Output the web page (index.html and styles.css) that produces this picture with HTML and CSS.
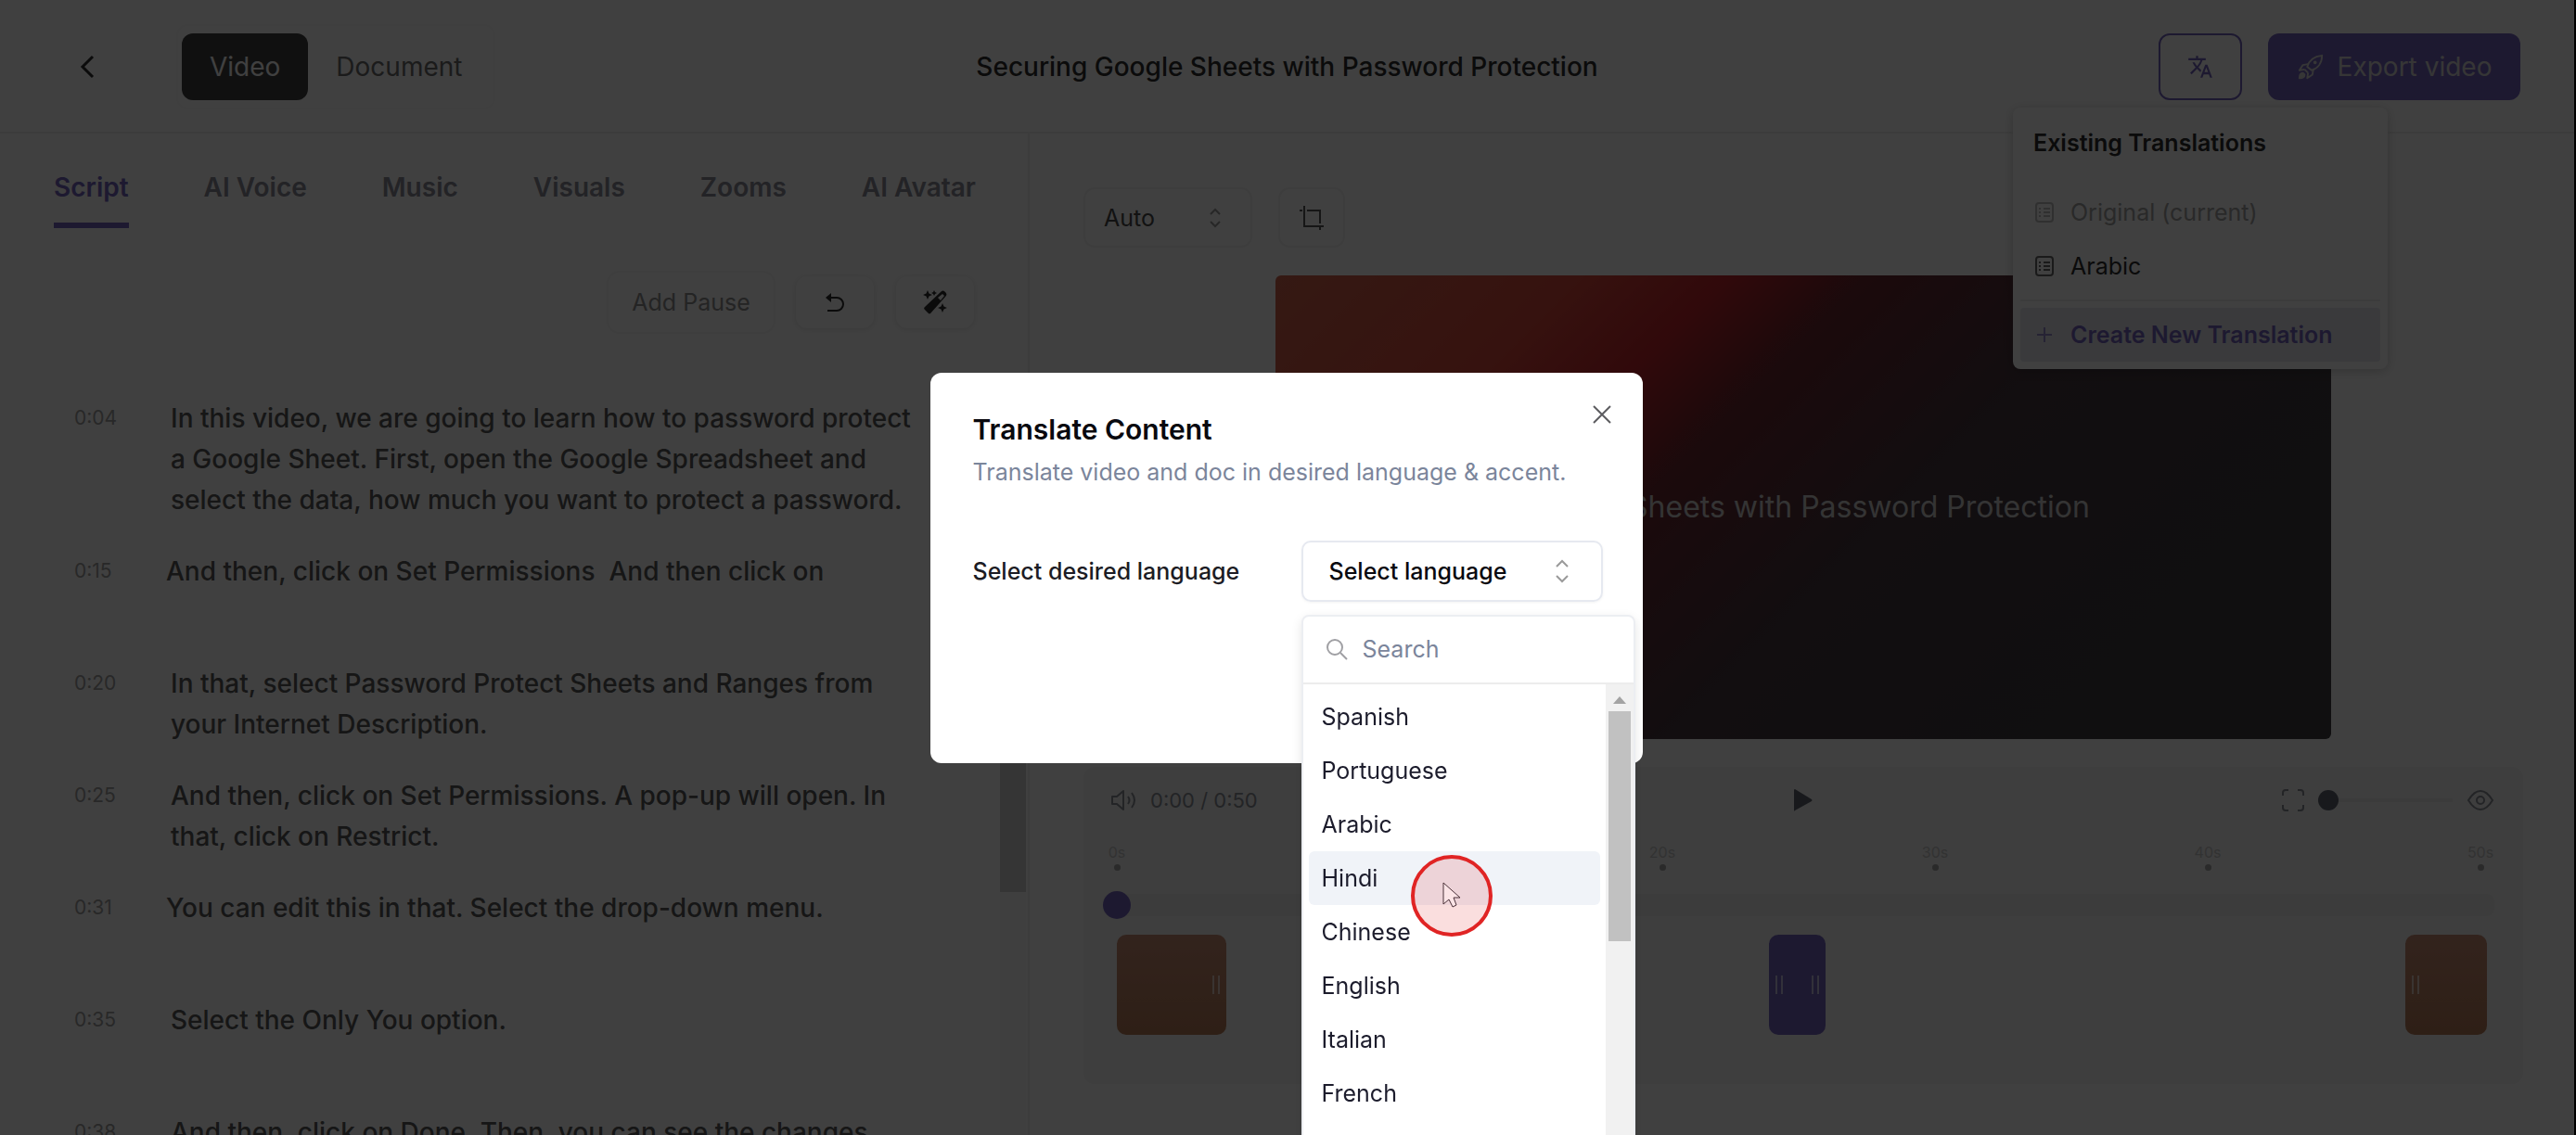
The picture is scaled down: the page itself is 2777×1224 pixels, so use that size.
FILE: index.html
```html
<!DOCTYPE html>
<html lang="en">
<head>
<meta charset="utf-8">
<title>Securing Google Sheets with Password Protection</title>
<link rel="stylesheet" href="styles.css">
</head>
<body>
<div class="app">
  <header class="header">
    <div class="header-start">
      <button class="back" aria-label="Back"><svg width="24" height="32" viewBox="0 0 24 32"><path d="M18 5 7 16l11 11" fill="none" stroke="currentColor" stroke-width="3"/></svg></button>
      <div class="mode">
        <button class="mode-item mode-active">Video</button>
        <button class="mode-item">Document</button>
      </div>
    </div>
    <h1 class="title">Securing Google Sheets with Password Protection</h1>
    <div class="header-end">
      <div class="translate">
        <button class="translate-button" aria-label="Translate"><svg width="28" height="28" viewBox="0 0 24 24" fill="currentColor"><path d="m12.87 15.07-2.54-2.51.03-.03A17.52 17.52 0 0 0 14.07 6H17V4h-7V2H8v2H1v2h11.17C11.5 7.92 10.44 9.75 9 11.35 8.07 10.32 7.3 9.19 6.69 8h-2c.73 1.63 1.73 3.17 2.98 4.56l-5.09 5.02L4 19l5-5 3.11 3.11.76-2.04zM18.5 10h-2L12 22h2l1.12-3h4.75L21 22h2l-4.5-12zm-2.62 7 1.62-4.33L19.12 17h-3.24z"/></svg></button>
        <div class="menu">
          <h2 class="menu-title">Existing Translations</h2>
          <button class="menu-item" disabled><svg class="menu-icon" width="24" height="24" viewBox="0 0 24 24"><rect x="3" y="2" width="18" height="20" rx="3"/><path d="M6 8h2m3 0h7M6 12h2m3 0h7M6 16h2m3 0h7"/></svg>Original (current)</button>
          <button class="menu-item"><svg class="menu-icon" width="24" height="24" viewBox="0 0 24 24"><rect x="3" y="2" width="18" height="20" rx="3"/><path d="M6 8h2m3 0h7M6 12h2m3 0h7M6 16h2m3 0h7"/></svg>Arabic</button>
          <hr class="menu-line">
          <button class="menu-item menu-create"><svg class="menu-icon" width="24" height="24" viewBox="0 0 24 24"><path d="M12 4v16M4 12h16"/></svg>Create New Translation</button>
        </div>
      </div>
      <button class="export"><svg width="30" height="30" viewBox="0 0 32 32" fill="none" stroke="currentColor" stroke-width="2" stroke-linejoin="round"><path d="M12 16c2-7 8-12 17-13 0 9-5 15-12 17z"/><path d="m13 13-6 1-4 6 6-1M19 19l-1 6-6 4 1-6M9 19l4 4"/><circle cx="21" cy="11" r="1"/><path d="M7 23c-3 0-4 3-4 6 3 0 6-1 6-4z" fill="currentColor"/></svg>Export video</button>
    </div>
  </header>

  <main class="main">
    <section class="editor">
      <nav class="tabs">
        <a class="tab tab-active" href="#script">Script</a>
        <a class="tab" href="#voice">AI Voice</a>
        <a class="tab" href="#music">Music</a>
        <a class="tab" href="#visuals">Visuals</a>
        <a class="tab" href="#zooms">Zooms</a>
        <a class="tab" href="#avatar">AI Avatar</a>
      </nav>
      <div class="tools">
        <button class="tool tool-pause" disabled>Add Pause</button>
        <button class="tool" aria-label="Undo"><svg width="24" height="24" viewBox="0 0 24 24" fill="none" stroke="currentColor" stroke-width="2"><path d="M5 7h9a7 7 0 0 1 0 14H4"/><path d="M8 2v10L2 7z" fill="currentColor" stroke="none"/></svg></button>
        <button class="tool" aria-label="Magic edit"><svg width="28" height="28" viewBox="0 0 28 28" fill="currentColor"><path d="M20.500 2.500a3 3 0 0 1 4 0l1 1a3 3 0 0 1 0 4L9.500 25.500a2 2 0 0 1-3 0l-3.500-3.500a2 2 0 0 1 0-3zM17 9l3 3 4-5-2-2z" fill-rule="evenodd"/><path d="m6 1 1.500 3.500L11 6 7.500 7.500 6 11 4.500 7.500 1 6l3.500-1.500zM22 15l1.500 3.500L27 20l-3.500 1.500L22 25l-1.500-3.500L17 20l3.500-1.500zM13 1l1 2 2 1-2 1-1 2-1-2-2-1 2-1z"/></svg></button>
      </div>
      <div class="script">
        <ol class="lines">
          <li class="line"><time class="stamp">0:04</time><p class="words">In this video, we are going to learn how to password protect a Google Sheet. First, open the Google Spreadsheet and select the data, how much you want to protect a password.</p></li>
          <li class="line line-single"><time class="stamp">0:15</time><p class="words">And then, click on Set Permissions&nbsp; And then click on</p></li>
          <li class="line"><time class="stamp">0:20</time><p class="words">In that, select Password Protect Sheets and Ranges from your Internet Description.</p></li>
          <li class="line"><time class="stamp">0:25</time><p class="words">And then, click on Set Permissions. A pop-up will open. In that, click on Restrict.</p></li>
          <li class="line line-single"><time class="stamp">0:31</time><p class="words">You can edit this in that. Select the drop-down menu.</p></li>
          <li class="line"><time class="stamp">0:35</time><p class="words">Select the Only You option.</p></li>
          <li class="line"><time class="stamp">0:38</time><p class="words">And then, click on Done. Then, you can see the changes.</p></li>
        </ol>
        <div class="rail"><div class="rail-thumb"></div></div>
      </div>
    </section>

    <section class="stage">
      <div class="stage-tools">
        <span class="picker">
          <select class="ratio" aria-label="Aspect ratio"><option>Auto</option></select>
          <svg class="picker-icon" width="16" height="24" viewBox="0 0 16 24"><path d="m3 8 5-5 5 5M3 16l5 5 5-5"/></svg>
        </span>
        <button class="crop" aria-label="Crop"><svg width="28" height="28" viewBox="0 0 28 28" fill="none" stroke="currentColor" stroke-width="2"><path d="M6 1v22h21M1 6h3M9 6h14v14M23 23v4"/></svg></button>
      </div>
      <div class="video"><p class="video-title">Securing Google Sheets with Password Protection</p></div>
      <div class="player">
        <div class="controls">
          <div class="controls-start">
            <svg width="30" height="28" viewBox="0 0 30 28" fill="none" stroke="currentColor" stroke-width="2" stroke-linejoin="round"><path d="M2 10h5l7-6v20l-7-6H2zM19 10q3 4 0 8M23 6q6 8 0 16"/></svg>
            <span class="clock">0:00 / 0:50</span>
          </div>
          <button class="play" aria-label="Play"><svg width="24" height="28" viewBox="0 0 24 28"><path d="M3 3v22q0 1 1 0l18-10q1-1 0-2L4 2Q3 2 3 3z" fill="currentColor"/></svg></button>
          <div class="controls-end">
            <svg width="24" height="24" viewBox="0 0 24 24" fill="none" stroke="currentColor" stroke-width="2"><path d="M1 7V4q0-3 3-3h3M17 1h3q3 0 3 3v3M23 17v3q0 3-3 3h-3M7 23H4q-3 0-3-3v-3"/></svg>
            <input class="zoom" type="range" min="0" max="100" value="0" aria-label="Timeline zoom">
            <svg width="30" height="24" viewBox="0 0 30 24" fill="none" stroke="currentColor" stroke-width="2"><path d="M2 12Q8 2 15 2t13 10q-6 10-13 10T2 12z"/><circle cx="15" cy="12" r="4"/></svg>
          </div>
        </div>
        <div class="timeline">
          <div class="ticks">
            <span class="tick">0s</span><span class="tick">10s</span><span class="tick">20s</span><span class="tick">30s</span><span class="tick">40s</span><span class="tick">50s</span>
          </div>
          <input class="seek" type="range" min="0" max="50" value="0" aria-label="Playback position">
          <div class="lane">
            <div class="clip clip-end" style="left:0%;width:8%"><i class="grip"></i></div>
            <div class="clip clip-zoom" style="left:47.800%;width:4.200%"><i class="grip"></i><i class="grip"></i></div>
            <div class="clip" style="left:94.500%;width:6%"><i class="grip"></i></div>
          </div>
        </div>
      </div>
    </section>
  </main>
</div>

<div class="backdrop">
  <div class="modal" role="dialog" aria-labelledby="dialog-title">
    <button class="close" aria-label="Close"><svg width="24" height="24" viewBox="0 0 24 24"><path d="m3 3 18 18M21 3 3 21" fill="none" stroke="currentColor" stroke-width="2"/></svg></button>
    <h2 class="modal-title" id="dialog-title">Translate Content</h2>
    <p class="modal-text">Translate video and doc in desired language &amp; accent.</p>
    <div class="field">
      <label class="field-label" for="language">Select desired language</label>
      <div class="combo">
        <button class="combo-button" id="language" aria-haspopup="listbox" aria-expanded="true">Select language<svg class="picker-icon" width="20" height="28" viewBox="0 0 20 28"><path d="m4 9 6-6 6 6M4 19l6 6 6-6"/></svg></button>
        <div class="popover">
          <div class="search">
            <svg width="24" height="24" viewBox="0 0 24 24" fill="none" stroke="currentColor" stroke-width="2"><circle cx="10" cy="10" r="8"/><path d="m16 16 7 7"/></svg>
            <input class="search-input" type="text" placeholder="Search" aria-label="Search languages">
          </div>
          <div class="results">
            <ul class="options" role="listbox">
              <li class="option" role="option">Spanish</li>
              <li class="option" role="option">Portuguese</li>
              <li class="option" role="option">Arabic</li>
              <li class="option option-active" role="option" aria-selected="true">Hindi</li>
              <li class="option" role="option">Chinese</li>
              <li class="option" role="option">English</li>
              <li class="option" role="option">Italian</li>
              <li class="option" role="option">French</li>
            </ul>
            <div class="bar">
              <svg width="16" height="8" viewBox="0 0 16 8"><path d="m8 0 7 8H1z" fill="#a3a3a3"/></svg>
              <div class="bar-thumb"></div>
            </div>
          </div>
          <div class="pointer"><svg width="24" height="32" viewBox="0 0 24 32"><path d="M3 2v23l6-5 4 8 4-2-3-8h7z" fill="#fbe4e6" stroke="#4a3038" stroke-width="1"/></svg></div>
        </div>
      </div>
    </div>
  </div>
</div>
</body>
</html>
```
FILE: styles.css
```css
:root {
  --ink: #2c2c2c;
  --muted: #8a8a98;
  --line: #f0f0f0;
  --purple: #7666c0;
}

* { box-sizing: border-box; }

body {
  margin: 0;
  height: 100vh;
  overflow: hidden;
  background: #000;
  color: var(--ink);
  font-family: Inter, "Liberation Sans", sans-serif;
  font-size: 28px;
  line-height: 40px;
}

h1, h2, p, ol, ul { margin: 0; padding: 0; list-style: none; }

button, input, select {
  margin: 0;
  padding: 0;
  border: 0;
  background: none;
  color: inherit;
  font: inherit;
}

button {
  display: flex;
  align-items: center;
  justify-content: center;
}

svg { flex: none; display: block; }

.app {
  display: flex;
  flex-direction: column;
  height: 100vh;
  margin-right: 2px;
  background: #fff;
}

/* Header */
.header {
  display: grid;
  grid-template-columns: 1fr auto 1fr;
  align-items: center;
  height: 144px;
  flex: none;
  padding: 2px 58px 0 82px;
  border-bottom: 2px solid var(--line);
}

.header-start, .header-end { display: flex; align-items: center; }
.header-start { gap: 84px; }
.header-end { gap: 28px; justify-content: flex-end; }

.title {
  font-size: 28px;
  font-weight: 500;
  margin-left: -24px;
}

.mode {
  display: flex;
  padding: 8px 4px;
  border: 2px solid #fafafa;
  border-radius: 12px;
}

.mode-item {
  height: 72px;
  padding: 0 30px;
  border-radius: 12px;
  color: #6c6c6c;
}

.mode-active {
  background: #404040;
  color: #fff;
}

.translate { position: relative; }

.translate-button {
  width: 90px;
  height: 72px;
  border: 2px solid var(--purple);
  border-radius: 12px;
  color: var(--purple);
}

.export {
  gap: 14px;
  width: 272px;
  height: 72px;
  border-radius: 12px;
  background: var(--purple);
  color: #d8d8d8;
}

.menu {
  position: absolute;
  z-index: 1;
  top: 80px;
  left: 50%;
  width: 404px;
  margin-left: -202px;
  padding: 8px;
  border-radius: 8px;
  background: #fff;
  box-shadow: 0 2px 12px rgba(0, 0, 0, .2);
  font-size: 25px;
  line-height: 32px;
}

.menu-title {
  padding: 14px 14px 30px;
  font-size: 25px;
  font-weight: 600;
}

.menu-item {
  justify-content: flex-start;
  gap: 16px;
  width: 100%;
  height: 58px;
  padding: 0 14px;
  border-radius: 4px;
}

.menu-item:disabled { color: #a4a4a4; }

.menu-create {
  background: #e6e8f0;
  color: var(--purple);
  font-weight: 600;
}

.menu-icon { fill: none; stroke: currentColor; stroke-width: 2; opacity: .7; }

.menu-line {
  height: 2px;
  margin: 7px 0;
  border: 0;
  background: var(--line);
}

/* Left column */
.main {
  display: grid;
  grid-template-columns: 2fr 3fr;
  flex: 1;
  min-height: 0;
}

.editor {
  display: flex;
  flex-direction: column;
  min-height: 0;
  overflow: hidden;
  border-right: 2px solid var(--line);
}

.tabs {
  display: flex;
  gap: 81px;
  padding: 38px 58px 0;
}

.tab {
  padding-bottom: 18px;
  border-bottom: 6px solid transparent;
  color: var(--muted);
  font-weight: 600;
  text-decoration: none;
  white-space: nowrap;
}

.tab-active {
  border-color: var(--purple);
  color: var(--purple);
}

.tools {
  display: flex;
  align-items: center;
  justify-content: flex-end;
  gap: 24px;
  padding: 48px 58px 71px;
}

.tool {
  width: 84px;
  height: 56px;
  border-radius: 12px;
  box-shadow: 0 1px 6px rgba(0, 0, 0, .12);
}

.tool-pause {
  width: 178px;
  height: 64px;
  color: #909090;
  font-size: 25px;
  box-shadow: 0 0 0 2px #f6f6f6;
}

.script {
  display: flex;
  flex: 1;
  min-height: 0;
}

.lines {
  flex: 1;
  padding: 0 84px 0 80px;
}

.line {
  display: grid;
  grid-template-columns: 104px 1fr;
  min-height: 88px;
  margin-bottom: 33px;
  line-height: 44px;
}

.line-single { grid-template-columns: 99px 1fr; }

.stamp {
  color: #a0a0a0;
  font-size: 21px;
}

.words { color: #585858; font-weight: 500; }

.rail {
  width: 28px;
  margin-right: 2px;
  background: #fcfcfc;
}

.rail-thumb {
  height: 533px;
  background: #d4d4d4;
}

/* Right column */
.stage {
  display: flex;
  flex-direction: column;
  gap: 30px;
  padding: 58px 55px 0 58px;
}

.stage-tools {
  display: flex;
  gap: 28px;
}

.picker {
  position: relative;
  display: flex;
}

.ratio {
  appearance: none;
  width: 182px;
  height: 65px;
  padding-left: 20px;
  border: 2px solid #f2f2f2;
  border-radius: 12px;
  color: #484848;
  font-size: 25px;
}

.picker-icon { fill: none; stroke: #9a9a9a; stroke-width: 2; }

.picker .picker-icon {
  position: absolute;
  top: 21px;
  right: 32px;
}

.crop {
  width: 72px;
  height: 65px;
  border: 2px solid #f2f2f2;
  border-radius: 12px;
  color: #585858;
}

.video {
  display: flex;
  align-items: center;
  justify-content: flex-end;
  align-self: center;
  width: 73.300%;
  aspect-ratio: 1137 / 500;
  padding-right: 260px;
  border-radius: 6px;
  background: linear-gradient(135deg, #d0644c 0%, #d8483c 20%, #c0242c 30%, #6c2830 39%, #483840 56%, #403c40 80%);
  color: #d0d0d0;
}

.video-title {
  font-size: 32px;
  white-space: nowrap;
}

.player {
  padding: 16px 31px 53px 29px;
  border-radius: 12px;
  background: #f6f6f6;
}

.controls {
  display: grid;
  grid-template-columns: 1fr auto 1fr;
  align-items: center;
  height: 40px;
  color: #8a8e96;
}

.controls-start, .controls-end { display: flex; align-items: center; }
.controls-start { gap: 13px; }
.controls-end { gap: 15px; justify-content: flex-end; }

.clock { font-size: 22px; }
.play { color: #606672; }

.zoom, .seek {
  appearance: none;
  display: block;
}

.zoom { width: 145px; height: 24px; }
.zoom::-webkit-slider-runnable-track { height: 4px; background: #ececec; }
.zoom::-webkit-slider-thumb {
  appearance: none;
  width: 22px;
  height: 22px;
  margin-top: -9px;
  border-radius: 50%;
  background: #606672;
}

.timeline { padding: 26px 15px 0 7px; }

.ticks {
  display: flex;
  justify-content: space-between;
  color: #c8c8c8;
  font-size: 16px;
  line-height: 20px;
}

.tick {
  display: flex;
  flex-direction: column;
  align-items: center;
  width: 0;
}

.tick::after {
  content: "";
  width: 7px;
  height: 7px;
  margin-top: 3px;
  border-radius: 50%;
  background: #a8a8a8;
}

.seek {
  width: calc(100% + 30px);
  height: 30px;
  margin: 22px -15px 17px;
}

.seek::-webkit-slider-runnable-track { height: 24px; border-radius: 8px; background: #efefef; }
.seek::-webkit-slider-thumb {
  appearance: none;
  width: 30px;
  height: 30px;
  margin-top: -3px;
  border-radius: 50%;
  background: var(--purple);
}

.lane {
  position: relative;
  height: 108px;
}

.clip {
  position: absolute;
  display: flex;
  align-items: center;
  justify-content: space-between;
  height: 108px;
  padding: 0 7px;
  border-radius: 10px;
  background: linear-gradient(#c88c74, #b87c58);
}

.clip-end { justify-content: flex-end; }
.clip-zoom { background: var(--purple); }

.grip {
  width: 8px;
  height: 20px;
  border: solid rgba(255, 255, 255, .6);
  border-width: 0 2px;
}

/* Dialog */
.backdrop {
  position: fixed;
  inset: 0;
  z-index: 2;
  display: flex;
  align-items: center;
  justify-content: center;
  padding-right: 4px;
  background: rgba(0, 0, 0, .75);
}

.modal {
  position: relative;
  width: 768px;
  min-height: 421px;
  padding: 41px 43px 43px 46px;
  border-radius: 12px;
  background: #fff;
  color: #09090f;
}

.close {
  position: absolute;
  top: 33px;
  right: 32px;
  color: #5c5c60;
}

.modal-title {
  font-size: 30px;
  font-weight: 600;
  line-height: 40px;
}

.modal-text {
  margin-top: 8px;
  color: #7b859b;
  font-size: 25px;
  line-height: 36px;
}

.field {
  display: flex;
  align-items: center;
  justify-content: space-between;
  margin-top: 56px;
}

.field-label {
  color: #1c1c24;
  font-size: 25px;
  font-weight: 500;
}

.combo { position: relative; }

.combo-button {
  justify-content: space-between;
  width: 325px;
  height: 66px;
  padding: 0 32px 0 28px;
  border: 2px solid #e6e9f0;
  border-radius: 10px;
  box-shadow: 0 1px 3px rgba(0, 0, 0, .05);
  font-size: 25px;
  font-weight: 500;
}

.popover {
  position: absolute;
  top: 80px;
  left: 0;
  width: 360px;
  border: 2px solid #eceef2;
  border-radius: 8px;
  background: #fff;
  box-shadow: 0 4px 12px rgba(0, 0, 0, .1);
  font-size: 25px;
}

.search {
  display: flex;
  align-items: center;
  gap: 16px;
  height: 73px;
  padding: 0 24px;
  border-bottom: 2px solid #ececec;
  color: #a0a0a4;
}

.search-input { width: 100%; outline: 0; }
.search-input::placeholder { color: #7b859b; opacity: 1; }

.results { display: flex; height: 520px; }

.options {
  flex: 1;
  padding: 6px;
}

.option {
  padding: 9px 14px;
  border-radius: 6px;
  color: #1c1c2c;
}

.option-active { background: #f0f3f8; }

.bar {
  display: flex;
  flex-direction: column;
  align-items: center;
  gap: 8px;
  width: 30px;
  padding-top: 13px;
  background: #f1f1f1;
}

.bar-thumb {
  width: 24px;
  height: 248px;
  background: #c1c1c1;
}

/* Click marker over the list */
.pointer {
  position: absolute;
  top: 257px;
  left: 116px;
  display: flex;
  align-items: center;
  justify-content: center;
  width: 88px;
  height: 88px;
  border: 4px solid #e02424;
  border-radius: 50%;
  background: rgba(224, 36, 36, .15);
}
```
